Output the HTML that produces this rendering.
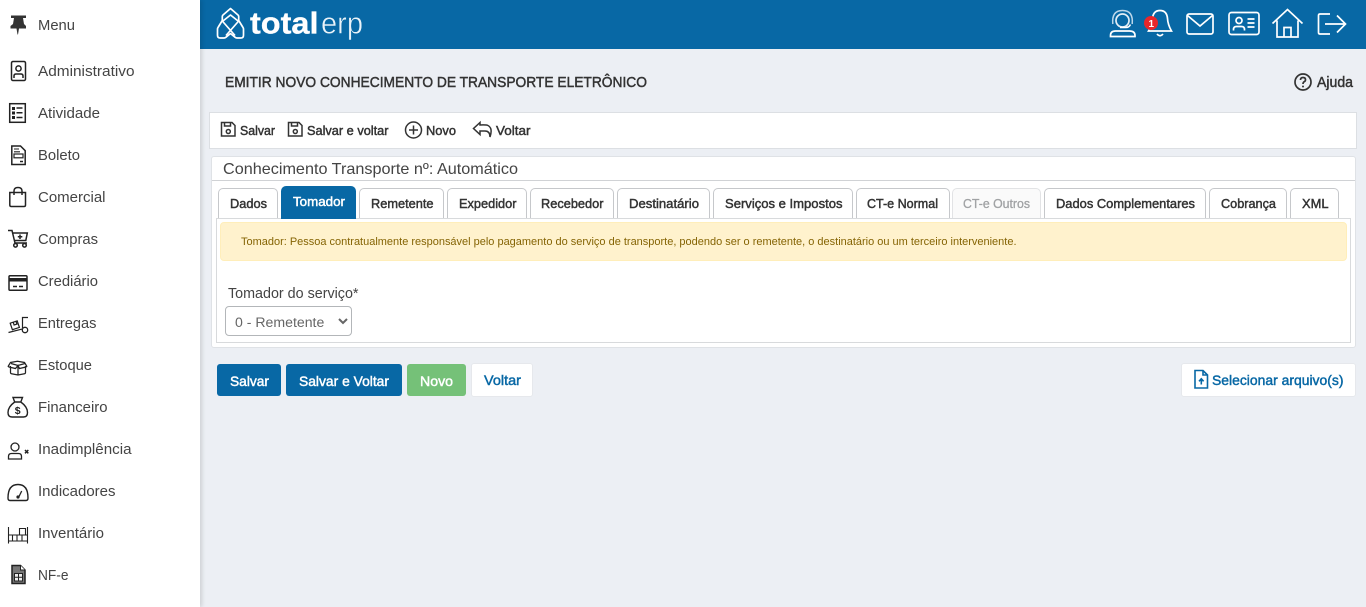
<!DOCTYPE html>
<html lang="pt-BR"><head><meta charset="utf-8"><title>Total ERP</title>
<style>
html,body{margin:0;padding:0}
body{width:1366px;height:607px;overflow:hidden;background:#eceff4;position:relative;font-family:"Liberation Sans",sans-serif}
.a{position:absolute;box-sizing:border-box}
#side{left:0;top:0;width:200px;height:607px;background:#fff;box-shadow:2px 0 4px rgba(0,0,0,.13)}
#head{left:200px;top:0;width:1166px;height:49px;background:#0868a5}
#tb{left:209px;top:112px;width:1148px;height:37px;background:#fff;border:1px solid #dcdfe3}
#card{left:211px;top:156px;width:1145px;height:192px;background:#fff;border:1px solid #dfe2e6;border-radius:3px}
#line{left:212px;top:180px;width:1143px;height:1px;background:#d0d2d5}
#box{left:216px;top:218px;width:1135px;height:125px;border:1px solid #d8dadc;background:#fff}
.t{top:188px;height:31px;background:#fff;border:1px solid #c6c8cb;border-bottom:0;border-radius:5px 5px 0 0}
#alert{left:220px;top:222px;width:1127px;height:39px;background:#fff2cd;border:1px solid #ffeeba;border-radius:4px}
select{position:absolute;left:225px;top:306px;width:127px;height:30px;background:#fff;border:1px solid #b3b6b9;border-radius:4px;color:#666;font:14.100px "Liberation Sans",sans-serif;padding:2px 0 0 5px}
.b{border-radius:3px;height:32px;top:364px}
svg{position:absolute;left:0;top:0}
text{font-family:"Liberation Sans",sans-serif}
.m text{font-size:14.4px;fill:#444}
.w text{stroke:currentColor;stroke-width:.45px}
.ic{fill:none;stroke:#222;stroke-width:1.5}
.hi{fill:none;stroke:#fff;stroke-width:1.7}
</style></head><body>
<div class="a" id="head"></div>
<div class="a" id="side"></div>
<div class="a" id="tb"></div>
<div class="a" id="card"></div>
<div class="a" id="line"></div>
<div class="a t" style="left:218px;width:60px"></div>
<div class="a t" style="left:281px;width:75px;top:186px;background:#0868a5;border-color:#0868a5"></div>
<div class="a t" style="left:359px;width:85px"></div>
<div class="a t" style="left:447px;width:80px"></div>
<div class="a t" style="left:530px;width:84px"></div>
<div class="a t" style="left:617px;width:93px"></div>
<div class="a t" style="left:713px;width:140px"></div>
<div class="a t" style="left:856px;width:94px"></div>
<div class="a t" style="left:952px;width:89px;background:#fafafa;border-color:#e2e3e5"></div>
<div class="a t" style="left:1044px;width:162px"></div>
<div class="a t" style="left:1209px;width:78px"></div>
<div class="a t" style="left:1290px;width:49px"></div>
<div class="a" id="box"></div>
<div class="a t" style="left:281px;width:75px;top:216px;height:3px;background:#0868a5;border:0;border-radius:0"></div>
<div class="a" id="alert"></div>
<select><option>0 - Remetente</option></select>
<div class="a b" style="left:217px;width:64px;background:#0868a5"></div>
<div class="a b" style="left:286px;width:116px;background:#0868a5"></div>
<div class="a b" style="left:407px;width:59px;background:#75c178"></div>
<div class="a b" style="left:471px;top:363px;height:34px;width:62px;background:#fff;border:1px solid #e6e8ec"></div>
<div class="a b" style="left:1181px;top:363px;height:34px;width:175px;background:#fff;border:1px solid #e6e8ec"></div>

<svg width="1366" height="607" viewBox="0 0 1366 607" xmlns="http://www.w3.org/2000/svg">
<g class="m">
<text x="38" y="30" textLength="37" lengthAdjust="spacingAndGlyphs">Menu</text>
<text x="38" y="76" textLength="96.500" lengthAdjust="spacingAndGlyphs">Administrativo</text>
<text x="38" y="118" textLength="62" lengthAdjust="spacingAndGlyphs">Atividade</text>
<text x="38" y="160" textLength="42" lengthAdjust="spacingAndGlyphs">Boleto</text>
<text x="38" y="202" textLength="67.500" lengthAdjust="spacingAndGlyphs">Comercial</text>
<text x="38" y="244" textLength="60" lengthAdjust="spacingAndGlyphs">Compras</text>
<text x="38" y="286" textLength="60" lengthAdjust="spacingAndGlyphs">Crediário</text>
<text x="38" y="328" textLength="58.500" lengthAdjust="spacingAndGlyphs">Entregas</text>
<text x="38" y="370" textLength="54" lengthAdjust="spacingAndGlyphs">Estoque</text>
<text x="38" y="412" textLength="69.500" lengthAdjust="spacingAndGlyphs">Financeiro</text>
<text x="38" y="454" textLength="93.500" lengthAdjust="spacingAndGlyphs">Inadimplência</text>
<text x="38" y="496" textLength="77.500" lengthAdjust="spacingAndGlyphs">Indicadores</text>
<text x="38" y="538" textLength="66" lengthAdjust="spacingAndGlyphs">Inventário</text>
<text x="38" y="580" textLength="30.500" lengthAdjust="spacingAndGlyphs">NF-e</text>
</g>

<!-- sidebar icons -->
<path d="M11 15.500h15v2.500h-3l1 6 2 2v2.500h-7l-1 6h-.5l-1-6H10.500V26l2.500-2 1-6H11z" fill="#333"/>
<g class="ic">
<rect x="11.500" y="61.500" width="14" height="19" rx="1.500"/><circle cx="18.500" cy="68.500" r="2.600"/><path d="M14 78v-2q0-2 2-2h5q2 0 2 2v2"/>
<rect x="9.700" y="103.700" width="15.600" height="18.600"/><path d="M16.500 108h6M16.500 112.800h6M16.500 117.500h6" stroke-width="1.500"/>
<path d="M11.800 146h8.700l4.700 4.700V164.500H11.800z"/><path d="M14 149h5M14 151.800h6" stroke-width="1.100"/><rect x="14" y="154" width="9" height="3.800" stroke-width="1.200"/><path d="M20 161.500h3"/>
<path d="M9.800 192.500h15.700v12.500q0 1.500-1.500 1.500H11.300q-1.500 0-1.500-1.500z"/><path d="M14 195v-4q0-3.500 4-3.500t4 3.500v4"/>
<path d="M8 230.500h4l3 12.500h12M12.800 233h14.500l-1.500 7.500H14.300"/><circle cx="15.500" cy="245.300" r="1.800"/><circle cx="24.500" cy="245.300" r="1.800"/><path d="M20 234.500v4.500M17.800 236.800h4.500"/>
<rect x="9" y="275.700" width="18" height="14.600" rx="1"/><path d="M13 286.500h4M19 286.500h4"/>
<!-- Entregas -->
<path d="M10.200 323.200l7-2.300 2.200 6.500-7 2.300zM13.200 322.200l.9 2.800 2.800-.9-.9-2.800M8.500 332.500l14.500-3.700M22.500 328V317.500h5.500" stroke-width="1.200"/><circle cx="25" cy="330" r="2.700" stroke-width="1.300"/>
<!-- Estoque -->
<path d="M10.500 366v6.500q0 1 1 1.200l6.500 1.300 6.500-1.300q1-.2 1-1.200V366M18 366v9M18 365.500l-2.500 3-6.500-1.500-.8-.7 2.300-3.800 7-1.300 7 1.300 2.300 3.800-.8.7-6.500 1.500zM11 363.500L18 365.500 25 363.500" stroke-width="1.250"/>
<!-- Financeiro -->
<path d="M13 397.500h9.500l-1.700 4.500q6.700 4.800 6.700 10.500 0 4.500-4 4.500H12q-4 0-4-4.500 0-5.700 6.700-10.500zM14.700 402h6.100" stroke-width="1.400"/>
<circle cx="15" cy="447" r="4" stroke-width="1.300"/><path d="M8.500 459v-2.500q0-3 3-3h7q3 0 3 3v2.500z" stroke-width="1.300"/>
<!-- Indicadores -->
<path d="M8 498q0-13.500 10-13.500T28 498q0 2.500-2 2.500H10q-2 0-2-2.500z" stroke-width="1.400"/>
<!-- Inventario -->
<path d="M8.500 527v16.500M27.500 527v16.500M8.500 535h19M8.500 541h19M12.500 535v6M17 535v6M22 535v6M19.500 535v-6.500h6V535" stroke-width="1.100"/>
</g>
<!-- NF-e -->
<path d="M12 565.500h8.500l4.500 4.500v13.500H12z" fill="#777" stroke="#222" stroke-width="1.500"/><path d="M20.500 565.500V570H25" fill="#fff" stroke="#222" stroke-width="1"/><rect x="14.500" y="573.500" width="8" height="7.500" fill="#eee" stroke="#222" stroke-width="1"/><path d="M14.500 577.200h8M18.500 573.500v7.500" stroke="#222" stroke-width="1"/>
<path d="M12 107h3v3h-3zM12 111.500h3v3h-3zM12 116h3v3h-3z" fill="#222"/>
<path d="M9 278h18v3.500H9z" fill="#222"/>
<path d="M25 450l3.300 3.300M28.300 450L25 453.300" stroke="#222" stroke-width="1.500"/>
<path d="M21.700 491L18.300 498" stroke="#222" stroke-width="1.300"/><circle cx="18" cy="497" r="1.600" fill="#222"/>
<text x="14.800" y="414" font-size="10.500" font-weight="bold" fill="#222">$</text>

<!-- logo -->
<g class="hi" stroke-width="2" stroke-linejoin="round">
<path d="M230.500 8.500l7.500 6.500q.7.600.7 1.500v4l4 6.500q.8 1 .8 2.200v6q0 2.800-2.800 2.800H237q-1 0-2-.8l-4.500-3.700-4.500 3.700q-1 .8-2 .8h-3.700q-2.800 0-2.800-2.800v-6q0-1.200.8-2.200l4-6.500v-4q0-.900.700-1.500z"/>
<path d="M222.300 21.500l8.200-6.500 8.200 6.500M222.300 21l12.700 14.500M238.700 21L226 35.500"/>
</g>
<text x="250" y="33.500" font-size="30.500" font-weight="bold" fill="#fff" stroke="#fff" stroke-width=".3" textLength="68.500" lengthAdjust="spacingAndGlyphs">total</text>
<text x="321" y="33.500" font-size="31" fill="#eaf3f9" stroke="#0868a5" stroke-width=".55" textLength="42" lengthAdjust="spacingAndGlyphs">erp</text>

<!-- header icons -->
<g class="hi">
<circle cx="1122.500" cy="20.500" r="6.500" stroke="#e3eef6"/><path d="M1112.800 24q-1.300-13.500 9.700-13.500t9.700 13.500" stroke="#bcd7ea" stroke-width="1.500"/><path d="M1120 27.500h6q3 0 4.500-3" stroke-width="1.500"/>
<path d="M1110.500 36.500v-1q0-4.500 5-4.500h14q5.500 0 5.500 4.500v1z"/>
<path d="M1160 10.500q6.800 0 7.500 8 .3 6 4 12.500h-23q3.700-6.500 4-12.500.7-8 7.500-8zM1157 34q3 3.500 6 0"/>
<rect x="1187" y="14" width="26" height="20" rx="2"/><path d="M1187.500 15.500l12.500 10.500 12.500-10.500"/>
<rect x="1229" y="12.500" width="30" height="22" rx="2.500"/><circle cx="1239" cy="20.500" r="3"/><path d="M1233.500 30.500v-1q0-3 3-3h5q3 0 3 3v1M1247.500 19h7M1247.500 23h7M1247.500 27h7"/>
<path d="M1272.500 23.500l15-14 15 14M1277 20.500v16.500h21V20.500M1284 37v-9.500h7V37" />
<path d="M1330 14h-10q-1.500 0-1.500 1.500v17q0 1.500 1.500 1.500h10M1325 24h20M1337 15.500l8.500 8.500-8.500 8.500"/>
</g>
<circle cx="1151" cy="23" r="7" fill="#e8262b"/><text x="1148.500" y="27" font-size="10" font-weight="bold" fill="#fff">1</text>

<!-- title -->
<g class="w" color="#333">
<text x="225" y="87" font-size="14.400" fill="#333" textLength="422" lengthAdjust="spacingAndGlyphs">EMITIR NOVO CONHECIMENTO DE TRANSPORTE ELETRÔNICO</text>
<text x="1317" y="87" font-size="14.400" fill="#333" textLength="36" lengthAdjust="spacingAndGlyphs">Ajuda</text>
<text x="240" y="135" font-size="12.800" fill="#333" textLength="35" lengthAdjust="spacingAndGlyphs">Salvar</text>
<text x="307" y="135" font-size="12.800" fill="#333" textLength="81.500" lengthAdjust="spacingAndGlyphs">Salvar e voltar</text>
<text x="426" y="135" font-size="12.800" fill="#333" textLength="30" lengthAdjust="spacingAndGlyphs">Novo</text>
<text x="496" y="135" font-size="12.800" fill="#333" textLength="34.500" lengthAdjust="spacingAndGlyphs">Voltar</text>
<text x="230" y="208" font-size="12.800" fill="#333" textLength="37" lengthAdjust="spacingAndGlyphs">Dados</text>
<text x="371" y="208" font-size="12.800" fill="#333" textLength="62.500" lengthAdjust="spacingAndGlyphs">Remetente</text>
<text x="459" y="208" font-size="12.800" fill="#333" textLength="57.500" lengthAdjust="spacingAndGlyphs">Expedidor</text>
<text x="541" y="208" font-size="12.800" fill="#333" textLength="62.500" lengthAdjust="spacingAndGlyphs">Recebedor</text>
<text x="629" y="208" font-size="12.800" fill="#333" textLength="70" lengthAdjust="spacingAndGlyphs">Destinatário</text>
<text x="725" y="208" font-size="12.800" fill="#333" textLength="117.500" lengthAdjust="spacingAndGlyphs">Serviços e Impostos</text>
<text x="867" y="208" font-size="12.800" fill="#333" textLength="71" lengthAdjust="spacingAndGlyphs">CT-e Normal</text>
<text x="1056" y="208" font-size="12.800" fill="#333" textLength="139" lengthAdjust="spacingAndGlyphs">Dados Complementares</text>
<text x="1221" y="208" font-size="12.800" fill="#333" textLength="55" lengthAdjust="spacingAndGlyphs">Cobrança</text>
<text x="1302" y="208" font-size="12.800" fill="#333" textLength="26.500" lengthAdjust="spacingAndGlyphs">XML</text>
</g>
<g class="w" color="#fff">
<text x="293" y="206" font-size="12.800" fill="#fff" textLength="52" lengthAdjust="spacingAndGlyphs">Tomador</text>
<text x="230" y="386" font-size="14" fill="#fff" textLength="39" lengthAdjust="spacingAndGlyphs">Salvar</text>
<text x="299" y="386" font-size="14" fill="#fff" textLength="90" lengthAdjust="spacingAndGlyphs">Salvar e Voltar</text>
<text x="420" y="386" font-size="14" fill="#fff" textLength="33" lengthAdjust="spacingAndGlyphs">Novo</text>
</g>
<g class="w" color="#0868a5">
<text x="484" y="385" font-size="14" fill="#0868a5" textLength="37" lengthAdjust="spacingAndGlyphs">Voltar</text>
<text x="1212" y="385" font-size="14" fill="#0868a5" textLength="131.500" lengthAdjust="spacingAndGlyphs">Selecionar arquivo(s)</text>
</g>
<text x="963" y="208" font-size="12.800" fill="#a0a2a4" stroke="#a0a2a4" stroke-width=".3" textLength="67" lengthAdjust="spacingAndGlyphs">CT-e Outros</text>
<text x="223" y="174" font-size="16" fill="#444" textLength="295" lengthAdjust="spacingAndGlyphs">Conhecimento Transporte nº: Automático</text>
<text x="241" y="245" font-size="10.700" fill="#856404" textLength="775.500" lengthAdjust="spacingAndGlyphs">Tomador: Pessoa contratualmente responsável pelo pagamento do serviço de transporte, podendo ser o remetente, o destinatário ou um terceiro interveniente.</text>
<text x="228" y="298" font-size="14.400" fill="#444" textLength="130.500" lengthAdjust="spacingAndGlyphs">Tomador do serviço*</text>

<!-- toolbar icons -->
<g fill="none" stroke="#333" stroke-width="1.500">
<path d="M221.500 122.500h10.500l3 3v10.500h-13.500z"/><path d="M224.500 122.500v3.500h6v-3.500"/><circle cx="228.300" cy="131.500" r="2"/>
<path d="M288.500 122.500h10.500l3 3v10.500h-13.500z"/><path d="M291.500 122.500v3.500h6v-3.500"/><circle cx="295.300" cy="131.500" r="2"/>
<circle cx="413.500" cy="130" r="8"/><path d="M413.500 125.500v9M409 130h9"/>
<path d="M480 122.500l-6.500 6 6.500 6v-3.500h5q5 0 5 6 3-9-2-11.500-1.500-.8-8-.5z"/>
<circle cx="1303" cy="82" r="8" stroke-width="1.700"/><path d="M1300.500 80q0-2.500 2.500-2.500t2.500 2.200q0 1.300-1.300 2-1.200.7-1.200 2.300" stroke-width="1.700"/>
</g>
<circle cx="1303" cy="86.500" r="1" fill="#333"/>
<!-- upload file -->
<g fill="none" stroke="#0868a5" stroke-width="1.600">
<path d="M1195 370.500h8l4.500 4.500v13h-12.500z"/><path d="M1203 370.500v4.500h4.500"/><path d="M1201.300 384.500v-5.500M1199 381.300l2.300-2.500 2.300 2.500"/>
</g>
</svg>
</body></html>
